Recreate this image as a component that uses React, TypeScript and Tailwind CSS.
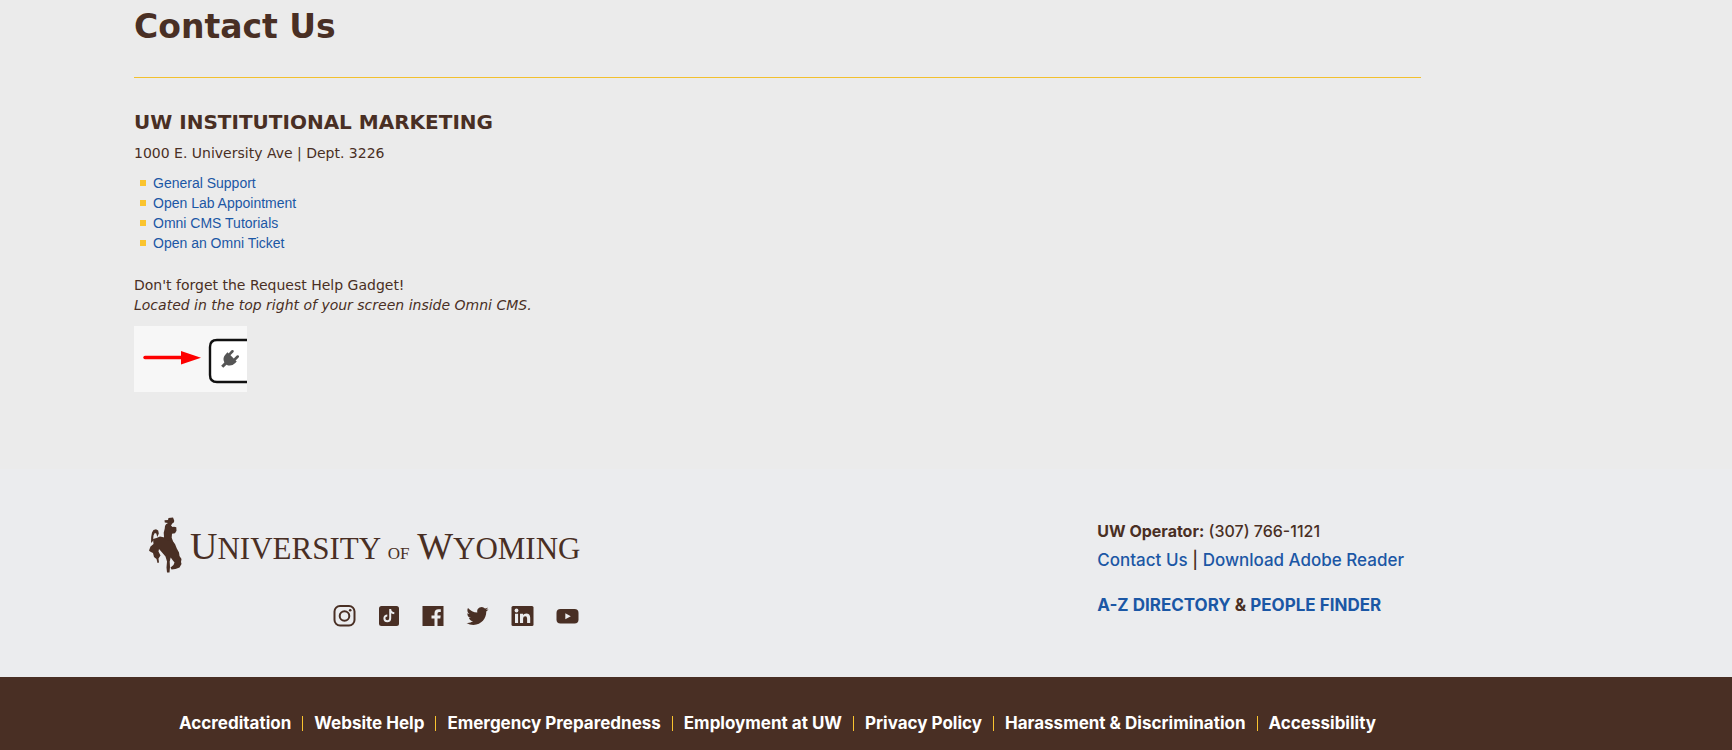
type LinkItem = { label: string; href: string };

const supportLinks: LinkItem[] = [
  { label: "General Support", href: "#general-support" },
  { label: "Open Lab Appointment", href: "#open-lab" },
  { label: "Omni CMS Tutorials", href: "#tutorials" },
  { label: "Open an Omni Ticket", href: "#ticket" },
];

const footerLinks: LinkItem[] = [
  { label: "Accreditation", href: "#accreditation" },
  { label: "Website Help", href: "#website-help" },
  { label: "Emergency Preparedness", href: "#emergency" },
  { label: "Employment at UW", href: "#employment" },
  { label: "Privacy Policy", href: "#privacy" },
  { label: "Harassment & Discrimination", href: "#harassment" },
  { label: "Accessibility", href: "#accessibility" },
];

function HelpGadget() {
  return (
    <svg width="113" height="66" viewBox="0 0 113 66" role="img" aria-label="Request Help gadget">
      <rect width="113" height="66" fill="#f7f7f7" />
      <path d="M11 31.5h38" stroke="#fe0000" strokeWidth="3.4" strokeLinecap="round" />
      <path d="M47 25l20 6.700-20 6.800z" fill="#fe0000" />
      <path d="M114 14H83q-7 0-7 7v28q0 7 7 7h31" fill="#fff" stroke="#111" strokeWidth="2.400" />
      <g transform="translate(96 33) rotate(45)" fill="#555">
        <path d="M-6.500 -3h13v2q0 6-5 7.500v4.500h-3v-4.500q-5-1.500-5-7.500z" />
        <rect x="-5" y="-8.500" width="2.600" height="6.500" rx="1.300" />
        <rect x="2.400" y="-8.500" width="2.600" height="6.500" rx="1.300" />
      </g>
    </svg>
  );
}

function BuckingHorse() {
  return (
    <svg width="34" height="56" viewBox="0 0 34 56" fill="#492f24" aria-hidden="true">
      {/* hat and rider */}
      <path d="M15.500 3.200L19 3l.500-2 4.500-.500 1.200 3L25 5.200l-1.700 1.300-1.300 2 1.500 1.500 1.500-.300 2.300.500.200 3.500-1.500 2.500-3 .500-.300 4 1.500 4 1 3-5 3-5.500-6 .300-5-.300-4 1-4L16 9l1-1.700L19 6l-3.200-.500z" />
      {/* tail */}
      <path d="M2 26l.200-6L3 15.500 4.500 13l2.500-.800 2.200 1.300.600 3-1.500 3.500-1-3.500-1.500-.500L4.500 18.500 4 24z" />
      {/* horse */}
      <path d="M4 22l3.500-1 3.500-1.500 4.500 1 2.500 2.500 5.500 1 2.500 3 1.800 4.500 2.200 4 .500 3.500 2 3-.500 3 .500 2-2 3.500-4 1.500-4 .500-1-2 3-2.500 1-2.500-2-2.500-1.800-2.500-1 4 .300 5.500-.500 5.500h-2.500l-.500-5 .500-6-1.500-5-3-3.500L10 32l-.500 2.500 2 4-2 3 .500 4-1.500.500-1-4-2.500-2-1-4L1 34.500l-1-1 1.500-4L4.500 27z" />
    </svg>
  );
}

function Logo() {
  return (
    <a href="#home" aria-label="University of Wyoming" className="flex items-start text-[#492f24]">
      <BuckingHorse />
      <span className="ml-[7px] pt-[11px] font-['Liberation_Serif',serif] text-[31px] leading-9 whitespace-nowrap">
        <span className="text-[38px]">U</span>NIVERSITY <span className="text-[17px]">OF</span>{" "}
        <span className="text-[38px]">W</span>YOMING
      </span>
    </a>
  );
}

function SocialIcons() {
  return (
    <div className="flex items-center gap-[22px] pr-px text-[#492f24]">
      <a href="#instagram" aria-label="Instagram">
        <svg width="23" height="22" viewBox="0 0 23 22" fill="none" stroke="currentColor" strokeWidth="2">
          <rect x="1.500" y="1" width="20" height="19.500" rx="5.500" />
          <circle cx="11.500" cy="11" r="4.800" />
          <circle cx="17.200" cy="5.200" r="1.300" fill="currentColor" stroke="none" />
        </svg>
      </a>
      <a href="#tiktok" aria-label="TikTok">
        <svg width="22" height="22" viewBox="0 0 22 22">
          <rect x="1" y="1" width="20" height="20" rx="2.500" fill="currentColor" />
          <path
            d="M12.200 4v9.300a2.900 2.900 0 1 1-2.900-2.900M12.200 4.300q.300 3.500 4.100 3.900"
            fill="none"
            stroke="#ebecee"
            strokeWidth="2"
          />
        </svg>
      </a>
      <a href="#facebook" aria-label="Facebook">
        <svg width="22" height="22" viewBox="0 0 22 22">
          <rect x="0.500" y="1" width="21" height="20" fill="currentColor" />
          <path
            d="M12.500 21v-7.500H9.500v-3h3V8.200q0-4 4-4h2.300v2.900h-1.800q-1.500 0-1.500 1.500v1.900h3.200l-.400 3h-2.800V21z"
            fill="#ebecee"
          />
        </svg>
      </a>
      <a href="#twitter" aria-label="Twitter">
        <svg width="23" height="22" viewBox="0 0 24 24" fill="currentColor">
          <path d="M23.950 4.570a10 10 0 0 1-2.820.770 4.960 4.960 0 0 0 2.160-2.720c-.950.550-2 .950-3.130 1.180a4.920 4.920 0 0 0-8.380 4.480C7.690 8.090 4.070 6.130 1.640 3.160a4.820 4.820 0 0 0-.670 2.480c0 1.710.870 3.210 2.190 4.090a4.900 4.900 0 0 1-2.230-.610v.060a4.920 4.920 0 0 0 3.950 4.830 5 5 0 0 1-2.210.080 4.940 4.940 0 0 0 4.600 3.420A9.870 9.870 0 0 1 0 19.540a13.990 13.990 0 0 0 7.550 2.210c9.050 0 14-7.500 14-13.980 0-.210 0-.420-.020-.630a9.940 9.940 0 0 0 2.460-2.550z" />
        </svg>
      </a>
      <a href="#linkedin" aria-label="LinkedIn">
        <svg width="23" height="22" viewBox="0 0 23 22">
          <rect x="0.500" y="1" width="22" height="20" rx="1.500" fill="currentColor" />
          <g fill="#ebecee">
            <circle cx="5.500" cy="5.500" r="1.900" />
            <path d="M4 8.700h3.100V18H4zM9 8.700h3V10q1-1.600 3.200-1.600 4 0 4 4.400V18h-3.100v-4.600q0-2.200-1.800-2.200-2.200 0-2.200 2.300V18H9z" />
          </g>
        </svg>
      </a>
      <a href="#youtube" aria-label="YouTube">
        <svg width="23" height="22" viewBox="0 0 23 22">
          <rect x="0.500" y="4" width="22" height="14.500" rx="4" fill="currentColor" />
          <path d="M9.300 8.200l5.500 3-5.500 3z" fill="#ebecee" />
        </svg>
      </a>
    </div>
  );
}

export default function App() {
  return (
    <div className="bg-[#ebebeb] text-[#492f24]">
      <main className="pr-[311px] pb-[77px] pl-[134px] font-['DejaVu_Sans',sans-serif] text-[14px] leading-5">
        <h1 className="pt-[5px] text-[33px] leading-11 font-bold">Contact Us</h1>
        <hr className="mt-7 border-[#f2c02e]" />
        <h2 className="mt-8 text-[20px] leading-6 font-bold">UW INSTITUTIONAL MARKETING</h2>
        <p className="mt-[9px]">1000 E. University Ave | Dept. 3226</p>
        <ul className="mt-[10px] font-['Liberation_Sans',sans-serif]">
          {supportLinks.map((link) => (
            <li key={link.href} className="flex items-center gap-[7px] pl-[6px]">
              <span className="size-[6px] bg-[#fac42f]" />
              <a href={link.href} className="text-[#1b57a5]">
                {link.label}
              </a>
            </li>
          ))}
        </ul>
        <p className="mt-[22px]">
          Don't forget the Request Help Gadget!
          <br />
          <em>Located in the top right of your screen inside Omni CMS.</em>
        </p>
        <div className="mt-[11px]">
          <HelpGadget />
        </div>
      </main>

      <footer className="font-['Inter',sans-serif]">
        <div className="flex justify-between bg-[#ebecee] pt-12 pr-[328px] pb-[50px] pl-[149px]">
          <div className="flex flex-col items-end gap-8">
            <Logo />
            <SocialIcons />
          </div>
          <div className="text-[17px] leading-[29px] font-medium">
            <p className="text-[16px]">
              <strong>UW Operator:</strong> (307) 766-1121
            </p>
            <p>
              <a href="#contact" className="text-[#1b57a5]">
                Contact Us
              </a>{" "}
              |{" "}
              <a href="#reader" className="text-[#1b57a5]">
                Download Adobe Reader
              </a>
            </p>
            <p className="mt-4 font-bold">
              <a href="#directory" className="text-[#1b57a5]">
                A-Z DIRECTORY
              </a>{" "}
              &{" "}
              <a href="#people" className="text-[#1b57a5]">
                PEOPLE FINDER
              </a>
            </p>
          </div>
        </div>
        <nav className="flex justify-center bg-[#492f24] pt-[39px] pr-[311px] pb-5 pl-[134px] text-[17px] leading-[15px] font-bold whitespace-nowrap text-white">
          {footerLinks.map((link) => (
            <a key={link.href} href={link.href} className="border-l border-[#fac42f] px-[11px] first:border-l-0">
              {link.label}
            </a>
          ))}
        </nav>
      </footer>
    </div>
  );
}
